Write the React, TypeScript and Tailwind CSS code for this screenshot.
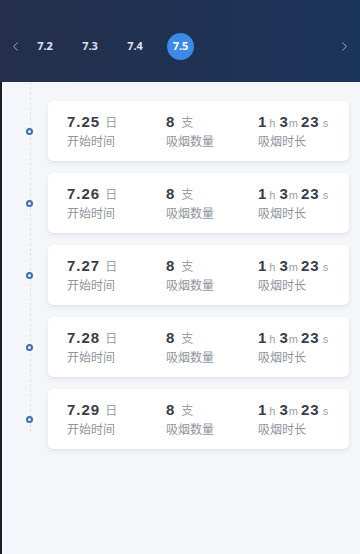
import React from 'react';
import { ChevronLeft, ChevronRight } from 'lucide-react';

const days = ['7.25', '7.26', '7.27', '7.28', '7.29'];
const tabs = ['7.2', '7.3', '7.4', '7.5'];

const num = 'text-[15px] font-bold text-[#3a3e47] leading-none tracking-[1px]';
const unit = 'text-[12px] text-[#9a9fa8] leading-none';
const label = 'text-[12px] text-[#8f949c] mt-[7px] leading-none';
const digits = { fontFamily: '"Liberation Sans", Arial, sans-serif' };

const Card: React.FC<{ day: string }> = ({ day }) => (
  <div className="flex items-center h-[72px]">
    <div className="w-[46px] flex pl-[24px] relative z-10">
      <div className="w-[7px] h-[7px] rounded-full border-[2px] border-[#3b6fb0] bg-[#f5f6fa]" />
    </div>
    <div className="flex-1 mr-[11px] h-[60px] bg-white rounded-[6px] shadow-[0_2px_4px_rgba(40,50,80,0.10)] flex items-center pl-[19px]">
      <div className="w-[99px]">
        <div className="flex items-baseline gap-[5px]">
          <span className={num} style={digits}>{day}</span>
          <span className={unit}>日</span>
        </div>
        <div className={label}>开始时间</div>
      </div>
      <div className="w-[92px]">
        <div className="flex items-baseline gap-[6px]">
          <span className={num} style={digits}>8</span>
          <span className={unit}>支</span>
        </div>
        <div className={label}>吸烟数量</div>
      </div>
      <div>
        <div className="flex items-baseline" style={digits}>
          <span className={num}>1</span>
          <span className="text-[11px] text-[#9a9fa8] leading-none ml-[2px] mr-[4px]">h</span>
          <span className={num}>3</span>
          <span className="text-[11px] text-[#9a9fa8] leading-none mr-[3px]">m</span>
          <span className={num}>23</span>
          <span className="text-[11px] text-[#9a9fa8] leading-none ml-[3px]">s</span>
        </div>
        <div className={label}>吸烟时长</div>
      </div>
    </div>
  </div>
);

export default function App() {
  return (
    <div
      className="w-[360px] h-[554px] flex flex-col overflow-hidden bg-[#171d2b]"
      style={{ fontFamily: '"Noto Sans", "Noto Sans CJK SC", sans-serif' }}
    >
      <div className="h-[82px] shrink-0 bg-gradient-to-r from-[#232f4b] to-[#1b345a] flex items-center px-[8px] pt-[10px]">
        <ChevronLeft size={15} className="text-[#aab3c6]" strokeWidth={1.5} />
        <div className="flex items-center ml-[9px] gap-[19px]">
          {tabs.map((t) =>
            t === '7.5' ? (
              <div key={t} className="w-[27px] h-[27px] rounded-full bg-[#3d8ae6] flex items-center justify-center text-[11px] font-bold text-white">
                {t}
              </div>
            ) : (
              <div key={t} className="w-[26px] text-center text-[11px] font-bold text-[#dfe4ee]">
                {t}
              </div>
            )
          )}
        </div>
        <div className="flex-1" />
        <ChevronRight size={15} className="text-[#aab3c6]" strokeWidth={1.5} />
      </div>
      <div className="flex-1 ml-[2px] bg-[#f5f6fa] relative pt-[13px]">
        <div className="absolute left-[28px] top-0 h-[350px] border-l border-dashed border-[#dde1e8]" />
        {days.map((d) => (
          <Card key={d} day={d} />
        ))}
      </div>
    </div>
  );
}
